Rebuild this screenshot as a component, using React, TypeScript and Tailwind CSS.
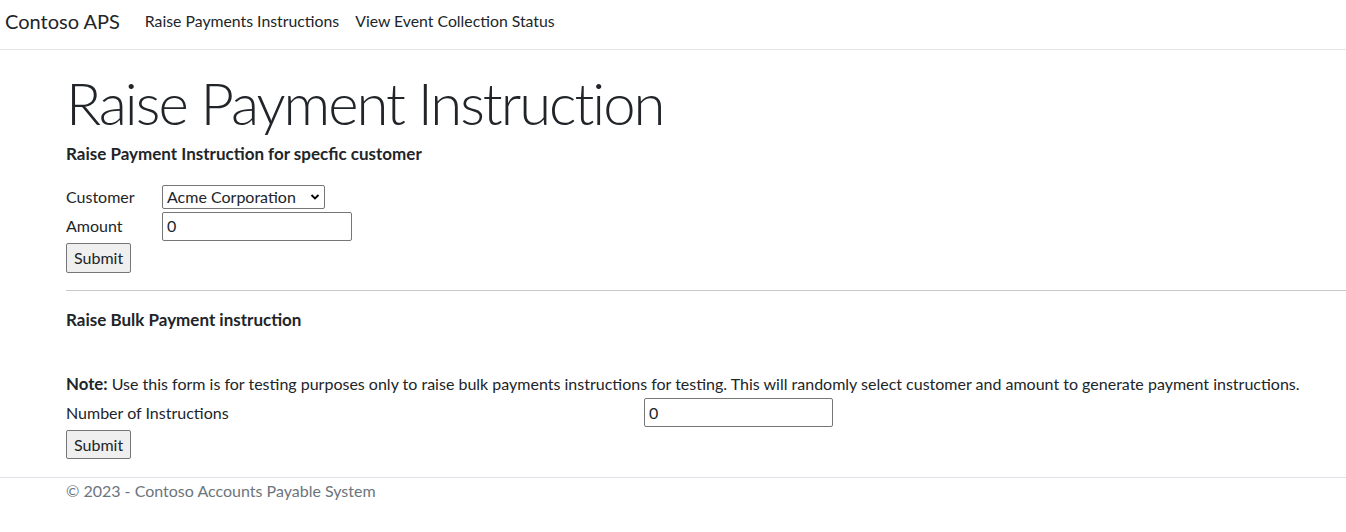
export default function App() {
  const font = { fontFamily: 'Lato, "Open Sans", sans-serif' };
  return (
    <div className="min-h-[532px] bg-white text-[#212529]" style={font}>
      {/* navbar */}
      <nav className="flex h-[50px] items-start border-b border-[#e5e5e5] pl-[5px] pt-[6px]">
        <span className="text-[20px] leading-[30px] text-[#212529]">Contoso APS</span>
        <a className="ml-[25px] text-[15.8px] leading-[30px] text-[#212529]">Raise Payments Instructions</a>
        <a className="ml-[16px] text-[15.8px] leading-[30px] text-[#212529]">View Event Collection Status</a>
      </nav>

      <main className="pl-[66px]">
        <h1 className="mt-[17px] text-[58px] font-light leading-[72px] tracking-[-2px]">Raise Payment Instruction</h1>
        <h6 className="mt-[3px] text-[17px] font-bold leading-[24px]">Raise Payment Instruction for specfic customer</h6>

        <form className="mt-[18px] text-[16px]">
          <div className="flex h-[26px] items-center">
            <label className="w-[96px]">Customer</label>
            <div className="relative h-[24px] w-[163px] rounded-[2px] border border-[#767676] bg-white">
              <span className="absolute left-[4px] top-[1px] leading-[20px]">Acme Corporation</span>
              <svg className="absolute right-[4px] top-[6px]" width="10" height="10" viewBox="0 0 10 10">
                <path d="M1.5 3 L5 6.5 L8.5 3" fill="none" stroke="#000" strokeWidth="1.8" />
              </svg>
            </div>
          </div>
          <div className="mt-[1px] flex h-[30px] items-center">
            <label className="w-[96px]">Amount</label>
            <div className="flex h-[29px] w-[190px] items-center rounded-[2px] border border-[#767676] pl-[4px]">0</div>
          </div>
          <button type="button" className="mt-[2px] h-[30px] rounded-[2px] border border-[#767676] bg-[#efefef] px-[7px] leading-[20px]">
            Submit
          </button>
        </form>

        <hr className="mt-[17px] border-t border-[#c8c8c8]" />

        <h6 className="mt-[17px] text-[17px] font-bold leading-[24px]">Raise Bulk Payment instruction</h6>

        <p className="mt-[40px] text-[16px] leading-[24px]">
          <strong className="text-[16.8px]">Note:</strong> Use this form is for testing purposes only to raise bulk payments instructions for testing. This will randomly select customer and amount to generate payment instructions.
        </p>
        <div className="mt-[2px] flex h-[29px] items-center text-[16px]">
          <label className="w-[578px]">Number of Instructions</label>
          <div className="flex h-[29px] w-[189px] items-center rounded-[2px] border border-[#767676] pl-[4px]">0</div>
        </div>
        <button type="button" className="mt-[3px] h-[29px] rounded-[2px] border border-[#767676] bg-[#efefef] px-[7px] text-[16px] leading-[20px]">
          Submit
        </button>
      </main>

      <footer className="mt-[18px] border-t border-[#dee2e6] pl-[66px] text-[16px] leading-[26px] text-[#6c757d]">
        © 2023 - Contoso Accounts Payable System
      </footer>
    </div>
  );
}
